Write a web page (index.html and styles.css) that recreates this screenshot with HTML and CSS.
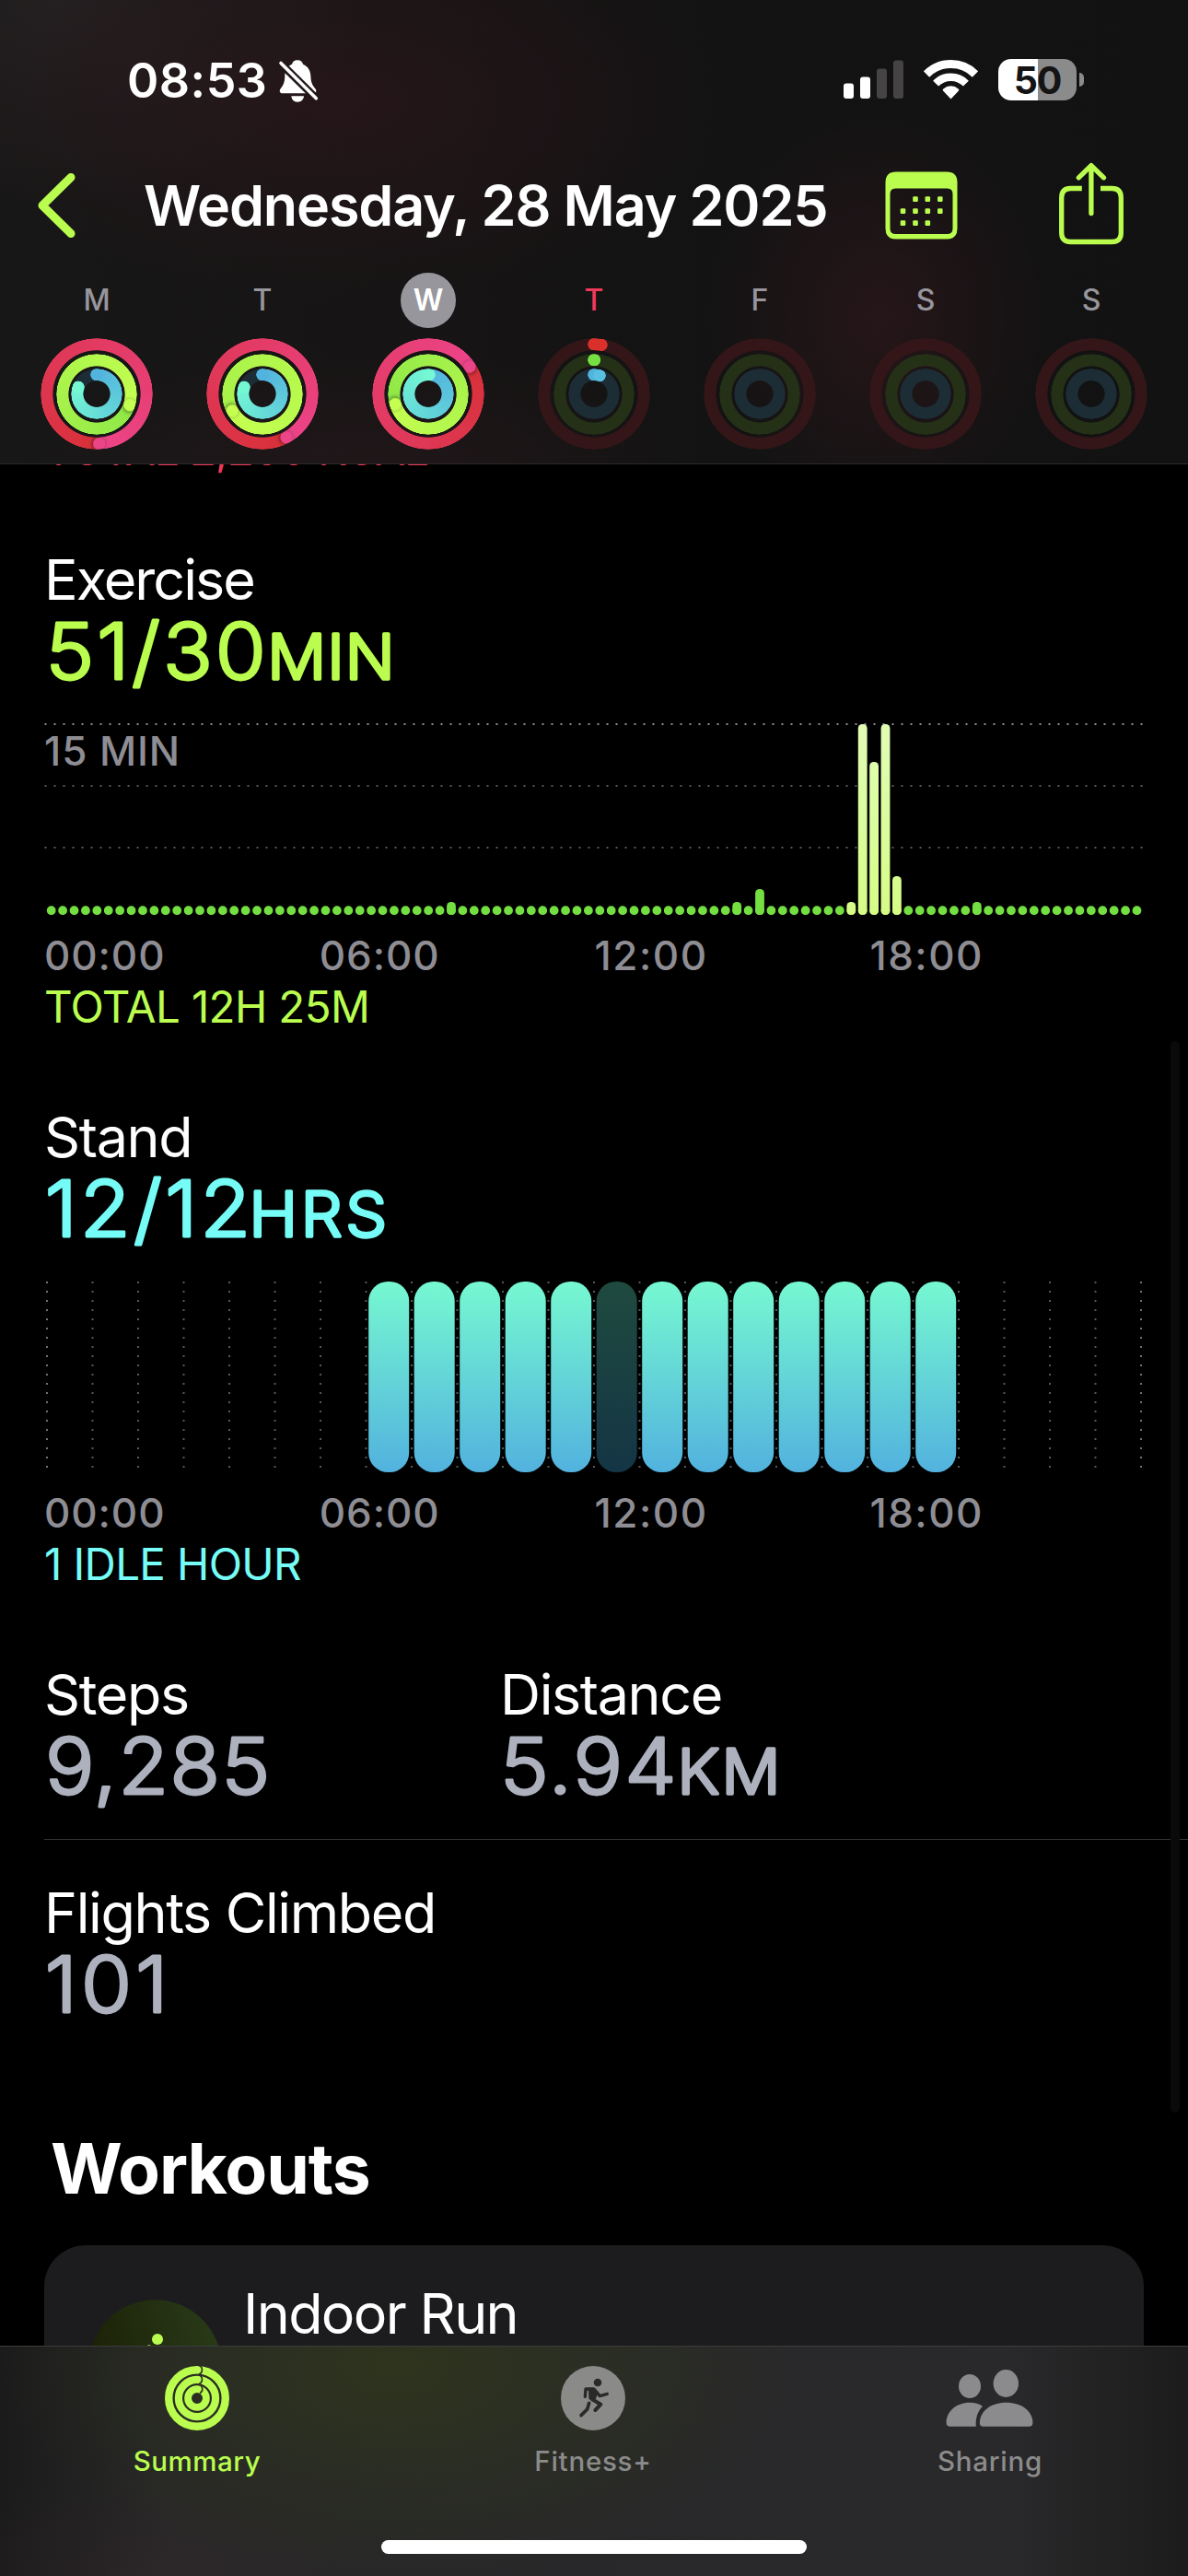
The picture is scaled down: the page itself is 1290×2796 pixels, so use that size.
FILE: index.html
```html
<!DOCTYPE html>
<html lang="en">
<head>
<meta charset="utf-8">
<title>Activity – Wednesday, 28 May 2025</title>
<link rel="stylesheet" href="styles.css">
</head>
<body>
<div class="screen">
  <header class="top">
    <div class="status">
      <div class="status-left">
        <span class="clock">08:53</span>
        <svg class="bell" width="44" height="48" viewBox="0 0 44 48">
          <path fill="#fff" d="M21 1.3c-3.5 0-5.5 2-6 4.5C9.5 8 7.3 13 7.3 19 7.2 26 5 29.500 2.500 32.500 1 34.500 1.800 37.300 4.500 37.300H38.500C41.500 37.300 42 34.500 40.500 32.500 38 29.500 35.500 26 35.400 19 35.300 13 32.500 8 27 5.800 26.500 3.300 24.500 1.300 21 1.300z"/>
          <path fill="#fff" d="M14.300 40.300H28C27.500 44.500 25 46.700 21.100 46.700S14.800 44.500 14.300 40.300z"/>
          <path stroke="#221619" stroke-width="8.500" d="M2.400 4.300 41.900 43.300"/>
          <path stroke="#fff" stroke-width="3.600" stroke-linecap="round" d="M3 4.500 41.300 42.800"/>
        </svg>
      </div>
      <div class="status-right">
        <svg width="65" height="43" viewBox="0 0 65 43">
          <rect x="0" y="25.500" width="11" height="16.500" rx="3" fill="#fff"/>
          <rect x="18" y="18.500" width="11" height="23.500" rx="3" fill="#fff"/>
          <rect x="36" y="9.500" width="11" height="32.500" rx="3" fill="#454344"/>
          <rect x="54" y="0.500" width="11" height="41.500" rx="3" fill="#454344"/>
        </svg>
        <svg width="59" height="43" viewBox="0 0 59 43">
          <g fill="none" stroke="#fff">
            <path stroke-width="9" d="M3 15.500A37.500 37.500 0 0 1 56 15.500"/>
            <path stroke-width="8.400" d="M13.100 25.600A23.200 23.200 0 0 1 45.900 25.600"/>
          </g>
          <path fill="#fff" d="M29.500 42.400 21 33.500Q20.200 32.300 21.300 31.400 25 28.300 29.500 28.300T37.700 31.400Q38.800 32.300 38 33.500z"/>
        </svg>
        <div class="battery"><span class="battery-body">50</span><span class="battery-nub"></span></div>
      </div>
    </div>

    <nav class="nav">
      <svg class="back" width="48" height="76" viewBox="0 0 48 76">
        <path d="M39 7.500 8 38 39 68.500" fill="none" stroke="#bafd4f" stroke-width="9" stroke-linecap="round" stroke-linejoin="round"/>
      </svg>
      <h1 class="title">Wednesday, 28 May 2025</h1>
      <svg class="calendar" width="79" height="74" viewBox="0 0 79 74" fill="#bafd4f">
        <path fill-rule="evenodd" d="M12 .5H67Q78.500 .5 78.500 12V62Q78.500 73.500 67 73.500H12Q.5 73.500 .5 62V12Q.5 .5 12 .5zM11.500 18.500Q5.500 18.500 5.500 24.500V62Q5.500 68 11.500 68H67.500Q73.500 68 73.500 62V24.500Q73.500 18.500 67.500 18.500z"/>
        <g>
          <rect x="30.200" y="27.200" width="5.600" height="5.800" rx="1.200"/><rect x="43.500" y="27.200" width="5.600" height="5.800" rx="1.200"/><rect x="57" y="27.200" width="5.600" height="5.800" rx="1.200"/>
          <rect x="16.700" y="40.200" width="5.600" height="5.800" rx="1.200"/><rect x="30.200" y="40.200" width="5.600" height="5.800" rx="1.200"/><rect x="43.500" y="40.200" width="5.600" height="5.800" rx="1.200"/><rect x="57" y="40.200" width="5.600" height="5.800" rx="1.200"/>
          <rect x="16.700" y="53.200" width="5.600" height="5.800" rx="1.200"/><rect x="30.200" y="53.200" width="5.600" height="5.800" rx="1.200"/><rect x="43.500" y="53.200" width="5.600" height="5.800" rx="1.200"/>
        </g>
      </svg>
      <svg class="share" width="70" height="96" viewBox="0 0 70 96" fill="none" stroke="#bafd4f" stroke-width="5.300">
        <path d="M24.800 29.500H12.700Q2.700 29.500 2.700 39.500V77.500Q2.700 87.500 12.700 87.500H57.300Q67.300 87.500 67.300 77.500V39.500Q67.300 29.500 57.300 29.500H45"/>
        <path stroke-linecap="round" stroke-linejoin="round" d="M34.900 5V56.500M21.300 17.800 34.900 4.600 48.500 17.800"/>
      </svg>
    </nav>

    <div class="week">
      <div class="day"><span class="letter">M</span>
        <div class="rings"><i class="ring move full" style="--end:177deg"></i><i class="ring exercise full" style="--end:108deg"></i><i class="ring stand" style="--end:291deg"></i></div></div>
      <div class="day"><span class="letter">T</span>
        <div class="rings"><i class="ring move full" style="--end:151deg"></i><i class="ring exercise full near" style="--end:242deg"></i><i class="ring stand" style="--end:291deg"></i></div></div>
      <div class="day"><span class="letter selected">W</span>
        <div class="rings"><i class="ring move full" style="--end:57deg"></i><i class="ring exercise full" style="--end:254deg"></i><i class="ring stand full" style="--end:4deg"></i></div></div>
      <div class="day"><span class="letter today">T</span>
        <div class="rings"><i class="ring move early" style="--end:9deg"></i><i class="ring exercise early" style="--end:0.500deg"></i><i class="ring stand early" style="--end:18deg"></i></div></div>
      <div class="day"><span class="letter">F</span>
        <div class="rings"><i class="ring move empty"></i><i class="ring exercise empty"></i><i class="ring stand empty"></i></div></div>
      <div class="day"><span class="letter">S</span>
        <div class="rings"><i class="ring move empty"></i><i class="ring exercise empty"></i><i class="ring stand empty"></i></div></div>
      <div class="day"><span class="letter">S</span>
        <div class="rings"><i class="ring move empty"></i><i class="ring exercise empty"></i><i class="ring stand empty"></i></div></div>
    </div>
  </header>

  <main class="content">
    <p class="summary move-text">TOTAL 2,200 KCAL</p>

    <section class="metric exercise-text">
      <h2 class="label tight">Exercise</h2>
      <svg class="value" width="600" height="90"><g transform="scale(1.06 1)">
        <text class="digits" x="1.400" y="72.200" letter-spacing="2.700">51/30</text>
        <text class="unit" x="228.600" y="72.200" letter-spacing="0.900">MIN</text></g>
      </svg>
      <svg class="chart" width="1194" height="208" viewBox="0 0 1194 208">
        <defs>
          <linearGradient id="pale" gradientUnits="userSpaceOnUse" x1="0" y1="0" x2="0" y2="208"><stop offset="0" stop-color="#e1fdb6"/><stop offset="1" stop-color="#d6fc86"/></linearGradient>
        </defs>
        <path d="M.5 1H1192.500" stroke="#8e8e93" stroke-width="2" stroke-dasharray="2 8"/>
        <path d="M.5 68H1192.500M.5 135H1192.500" stroke="#58585b" stroke-width="2" stroke-dasharray="2 8"/>
        <text class="axis-value" x="0" y="46">15 MIN</text>
        <path d="M7.700 203.200H1187" stroke="#74df41" stroke-width="9.800" stroke-linecap="round" stroke-dasharray="0 12.408"/>
        <g fill="#74df41">
          <rect x="437.100" y="194" width="9.800" height="14" rx="4.500"/>
          <rect x="747.300" y="194" width="9.800" height="14" rx="4.500"/>
          <rect x="772.100" y="180" width="9.800" height="28" rx="4.500"/>
          <rect x="1007.900" y="194" width="9.800" height="14" rx="4.500"/>
        </g>
        <g fill="url(#pale)">
          <rect x="871.400" y="194" width="9.800" height="14" rx="4.500"/>
          <rect x="883.800" y="1" width="9.800" height="207" rx="4.500"/>
          <rect x="896.200" y="42" width="9.800" height="166" rx="4.500"/>
          <rect x="908.600" y="1" width="9.800" height="207" rx="4.500"/>
          <rect x="921" y="166" width="9.800" height="42" rx="4.500"/>
        </g>
      </svg>
      <div class="hours"><span>00:00</span><span>06:00</span><span class="wide">12:00</span><span class="wide">18:00</span></div>
      <p class="summary">TOTAL 12H 25M</p>
    </section>

    <section class="metric stand-text">
      <h2 class="label">Stand</h2>
      <svg class="value" width="600" height="90"><g transform="scale(1.06 1)">
        <text class="digits" x="0.600" y="72.200" letter-spacing="3.100">12/12</text>
        <text class="unit" x="209.900" y="72.200" letter-spacing="3.400">HRS</text></g>
      </svg>
      <svg class="chart stand-chart" width="1194" height="207" viewBox="0 0 1194 207">
        <defs>
          <pattern id="grid" patternUnits="userSpaceOnUse" x="2" y="0" width="49.500" height="10"><rect width="2" height="2" fill="#58585b"/></pattern>
          <linearGradient id="aqua" x1="0" y1="0" x2="0" y2="1"><stop offset="0" stop-color="#76f8d1"/><stop offset="1" stop-color="#52b2de"/></linearGradient>
          <linearGradient id="idle" x1="0" y1="0" x2="0" y2="1"><stop offset="0" stop-color="#1f4a3f"/><stop offset="1" stop-color="#143545"/></linearGradient>
        </defs>
        <rect x="50" width="1130" height="202" fill="url(#grid)"/>
        <path d="M3 0V202M1191 0V202" stroke="#8e8e93" stroke-width="1.600" stroke-dasharray="2 8"/>
        <g fill="url(#aqua)">
          <rect x="352.200" width="44" height="207" rx="21"/><rect x="401.700" width="44" height="207" rx="21"/>
          <rect x="451.200" width="44" height="207" rx="21"/><rect x="500.700" width="44" height="207" rx="21"/>
          <rect x="550.200" width="44" height="207" rx="21"/><rect x="649.200" width="44" height="207" rx="21"/>
          <rect x="698.700" width="44" height="207" rx="21"/><rect x="748.200" width="44" height="207" rx="21"/>
          <rect x="797.700" width="44" height="207" rx="21"/><rect x="847.200" width="44" height="207" rx="21"/>
          <rect x="896.700" width="44" height="207" rx="21"/><rect x="946.200" width="44" height="207" rx="21"/>
        </g>
        <rect x="599.700" width="44" height="207" rx="21" fill="url(#idle)"/>
      </svg>
      <div class="hours"><span>00:00</span><span>06:00</span><span class="wide">12:00</span><span class="wide">18:00</span></div>
      <p class="summary">1 IDLE HOUR</p>
    </section>

    <section class="totals">
      <div class="total">
        <h2 class="label">Steps</h2>
        <svg class="value" width="480" height="90"><g transform="scale(1.06 1)"><text class="digits" x="1" y="72.200" letter-spacing="1.400">9,285</text></g></svg>
      </div>
      <div class="total">
        <h2 class="label">Distance</h2>
        <svg class="value" width="480" height="90"><g transform="scale(1.06 1)">
          <text class="digits" x="0" y="72.200" letter-spacing="2.200">5.94</text>
          <text class="unit" x="181.600" y="72.200" letter-spacing="2">KM</text></g></svg>
      </div>
    </section>
    <hr class="divider">
    <section class="flights">
      <h2 class="label">Flights Climbed</h2>
      <svg class="value" width="480" height="90"><g transform="scale(1.06 1)"><text class="digits" x="0.800" y="72.200" letter-spacing="4">101</text></g></svg>
    </section>

    <h2 class="heading">Workouts</h2>
    <article class="card">
      <svg class="workout-icon" width="145" height="145" viewBox="0 0 145 145">
        <defs><linearGradient id="olive" x1="0" y1="0.600" x2="1" y2="0.300"><stop offset="0" stop-color="#1b1f05"/><stop offset="1" stop-color="#293b19"/></linearGradient></defs>
        <circle cx="72.500" cy="72.500" r="72.200" fill="url(#olive)"/>
        <circle cx="75" cy="43" r="6" fill="#bafd4f"/>
        <path d="M55 66V56L66 52.300 74 60 88 62M68 56 66 78 78 88 74 104M64 82 56 96H46" fill="none" stroke="#bafd4f" stroke-width="6" stroke-linecap="round" stroke-linejoin="round"/>
      </svg>
      <h3 class="label">Indoor Run</h3>
    </article>
  </main>

  <footer class="tabs">
    <div class="tab active">
      <svg width="70" height="70" viewBox="0 0 70 70" fill="none">
        <g stroke="#bafd4f"><circle cx="35" cy="35" r="30.800" stroke-width="8.400"/><circle cx="35" cy="35" r="20.100" stroke-width="8.200"/><circle cx="35" cy="35" r="9.900" stroke-width="7.800"/></g>
        <path stroke="#2c3123" stroke-width="1.700" d="M37-.5A5 5 0 0 1 37 9M37 10A5 5 0 0 1 37 19.500M37 20.200A5 5 0 0 1 38 29.500"/>
      </svg>
      <span>Summary</span>
    </div>
    <div class="tab">
      <svg width="70" height="70" viewBox="33 30 210 210">
        <circle cx="138" cy="135" r="105" fill="#8a8a89"/>
        <g fill="#2a2b29" stroke="#2a2b29" stroke-linecap="round" stroke-linejoin="round">
          <circle cx="153" cy="84" r="13" stroke="none"/>
          <path stroke-width="6" d="M126 104 144 105 150 118 143 140 127 136z"/>
          <g fill="none" stroke-width="10"><path d="M112 130 114 105H140"/><path d="M147 112 160 128 184 121"/><path stroke-width="12" d="M134 138 163 155 145 174"/><path stroke-width="11" d="M125 151 119 171 99 191"/></g>
        </g>
      </svg>
      <span>Fitness+</span>
    </div>
    <div class="tab">
      <svg width="96" height="70" viewBox="0 0 96 70" fill="#8b8b8d">
        <ellipse cx="26" cy="22" rx="12" ry="13"/><ellipse cx="65.300" cy="19" rx="13.700" ry="15"/>
        <path d="M41 65.700q-4.200 0-4.200-4C37 49 49 39.700 65.600 39.700S94.400 49 94.400 61.700q0 4-4.200 4z"/>
        <path d="M5 65.700q-4.400 0-4.400-4C.6 49 12 39.700 26 39.700c5.500 0 10.500 1.500 14 4C35 49 32 56 32.800 65.700z"/>
      </svg>
      <span>Sharing</span>
    </div>
    <div class="home-indicator"></div>
  </footer>
  <div class="scrollbar"></div>
</div>
</body>
</html>
```

FILE: styles.css
```css
* { box-sizing: border-box; margin: 0; padding: 0; }
body { background: #000; color: #fff; font-family: Inter, "Liberation Sans", sans-serif; }
svg { display: block; flex: none; }
.screen { position: relative; display: flex; flex-direction: column; width: 1290px; height: 2796px; overflow: hidden; }

/* Header */
.top {
  flex: none; height: 504px; border-bottom: 1px solid #2a2a2a;
  background:
    radial-gradient(ellipse 190px 230px at 955px 345px, rgba(68, 26, 34, .38), transparent),
    radial-gradient(ellipse 420px 210px at 370px 110px, rgba(58, 22, 30, .4), transparent),
    radial-gradient(ellipse 360px 120px at 400px 504px, rgba(54, 26, 34, .3), transparent),
    radial-gradient(ellipse 340px 220px at 60px 0, rgba(60, 52, 54, .3), transparent),
    linear-gradient(90deg, #181717, #161414 40%, #131313 60%, #121212);
}
.status { display: flex; justify-content: space-between; height: 153px; padding: 58px 113px 0 138px; }
.status-left { display: flex; gap: 12px; }
.clock { font-size: 52px; font-weight: 600; line-height: 60px; letter-spacing: .5px; }
.bell { margin-top: 6px; }
.status-right { display: flex; gap: 22px; padding-top: 7px; }
.battery { display: flex; align-items: center; gap: 3px; height: 45px; margin-top: -1px; }
.battery-body {
  width: 85px; height: 45px; border-radius: 14px; text-align: center;
  font-size: 41px; font-weight: 700; line-height: 46px; letter-spacing: -1.2px; color: #141414;
  background: linear-gradient(90deg, #fff 50.500%, #8b8b8b 50.500%);
}
.battery-nub { width: 5px; height: 15px; border-radius: 0 5px 5px 0; background: #8b8b8b; }

.nav { display: flex; align-items: center; height: 140px; padding: 0 70px 0 38px; }
.title { flex: 1; margin-left: 70px; font-size: 61px; font-weight: 600; line-height: 76px; letter-spacing: -1.150px; white-space: nowrap; }
.calendar { margin-right: 110px; }

.week { display: grid; grid-template-columns: repeat(7, 180px); padding: 3px 15px 0; }
.day { display: flex; flex-direction: column; align-items: center; gap: 11px; }
.letter { width: 60px; height: 60px; border-radius: 50%; text-align: center; font-size: 32px; font-weight: 500; line-height: 60px; color: #98969d; }
.letter.selected { background: #98969d; color: #fff; font-weight: 600; }
.letter.today { color: #f0385a; }

/* Activity rings: a conic sweep masked to a band, with round caps */
.rings { display: grid; width: 121.400px; height: 121.400px; place-items: center; }
.ring {
  position: relative; grid-area: 1 / 1; width: var(--size); height: var(--size); border-radius: 50%;
  background: conic-gradient(var(--from), var(--to) var(--end), var(--track) var(--end));
  mask: radial-gradient(closest-side, transparent calc(100% - 13.800px), #000 calc(100% - 13px), #000 calc(100% - .6px), transparent);
}
.ring::before, .ring::after {
  content: ""; position: absolute; inset: 0; border-radius: 50%;
  background: radial-gradient(circle at 50% 6.650px, var(--from) 6.400px, transparent 7px);
}
.ring::after {
  background: radial-gradient(circle at 50% 6.650px, var(--to) 6.400px, transparent 7px);
  transform: rotate(var(--end)); filter: drop-shadow(1px 0 2px rgba(0, 0, 0, .55));
}
.move { --size: 121.400px; --from: #d83038; --to: #ec4489; --track: #341618; }
.exercise { --size: 88.400px; --from: #8ee847; --to: #c5ff50; --track: #243117; }
.exercise.near { --from: #a6f149; }
.stand { --size: 55.400px; --from: #52b3de; --to: #74f8d4; --track: #1c2d36; }
.ring.full { background: conic-gradient(from var(--end), var(--from), var(--to)); }
.ring.full::before, .ring.empty::before, .ring.empty::after { display: none; }
.ring.empty { background: var(--track); }
.move.early { --to: #d9302b; --from: #d9302b; }
.exercise.early { --to: #74e042; --from: #74e042; }
.stand.early { --to: #58c0e0; }
.ring.early::after, .stand::after { filter: none; }

/* Scrolling content */
.content { flex: 1; min-height: 0; overflow: hidden; padding-left: 48px; }
.label { font-size: 61px; font-weight: 400; line-height: 72px; letter-spacing: -1.380px; color: #fff; white-space: nowrap; }
.label.tight { letter-spacing: -1.950px; }
.value { fill: currentColor; stroke: currentColor; stroke-width: 2.800px; stroke-linejoin: round; overflow: visible; }
.digits { font-size: 84px; font-weight: 300; }
.unit { font-size: 67px; font-weight: 300; stroke-width: 3.400px; }
.summary { font-size: 47.500px; line-height: 56px; letter-spacing: -.64px; white-space: nowrap; }
.move-text { margin-top: -44px; letter-spacing: -.97px; color: #f0385a; }
.metric { margin-top: 77px; }
.exercise-text { color: #bafd4f; }
.stand-text { color: #76fcf6; }
.chart { margin-top: 30px; }
.stand-chart { margin-top: 31px; }
.axis-value { font-size: 44px; font-weight: 500; letter-spacing: .9px; fill: #8e8d93; stroke: none; }
.hours { display: grid; grid-template-columns: repeat(4, 298.800px); margin: 17px 0 1px; font-size: 44px; font-weight: 500; line-height: 54px; letter-spacing: .9px; color: #8e8d93; }
.hours .wide { letter-spacing: 1.500px; }
.totals { display: grid; grid-template-columns: 495px 1fr; margin-top: 77px; color: #adb1be; }
.divider { height: 1px; margin-top: 31px; border: 0; background: #343436; }
.flights { margin-top: 43px; color: #adb1be; }
.heading { margin: 107px 0 0 7px; font-size: 75px; font-weight: 700; line-height: 90px; letter-spacing: -1.080px; }
.card { display: flex; gap: 23px; width: 1194px; height: 300px; margin-top: 38px; padding: 38px 0 0 48px; border-radius: 45px; background: #1c1c1e; }
.card .label { letter-spacing: -1.640px; }
.workout-icon { margin-top: 21px; }

/* Tab bar */
.tabs {
  flex: none; display: grid; grid-template-columns: repeat(3, 430px); grid-template-rows: 210px 15px; height: 250px;
  border-top: 1px solid #3b3c3b;
  background:
    radial-gradient(ellipse 430px 230px at 430px 20px, rgba(50, 60, 22, .6), transparent),
    radial-gradient(ellipse 260px 120px at 160px 250px, rgba(60, 40, 42, .25), transparent),
    linear-gradient(90deg, #1b1b1b, #272728 14%, #29292b 85%, #1c1c1c);
}
.tab { display: flex; flex-direction: column; align-items: center; gap: 15px; padding-top: 21px; font-size: 29.500px; font-weight: 500; line-height: 36px; letter-spacing: .75px; color: #8b8b8b; }
.tab.active { color: #bafd4f; letter-spacing: .53px; }
.tab:first-child, .tab:nth-child(2) { padding-right: 2px; }
.home-indicator { grid-column: 1 / -1; justify-self: center; width: 462px; height: 15px; border-radius: 8px; background: #fff; }
.scrollbar { position: absolute; top: 1130px; right: 9px; width: 10px; height: 1163px; border-radius: 5px; background: #0a0a0a; }
```
